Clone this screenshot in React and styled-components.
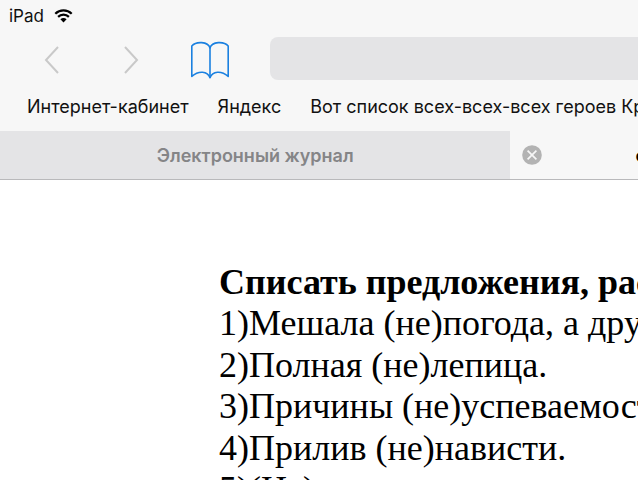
import React, { useState } from "react"
import styled, { createGlobalStyle } from "styled-components"

const GlobalStyle = createGlobalStyle`
    * {
        box-sizing: border-box;
    }

    body {
        margin: 0;
        background-color: #fff;
        font-family: Inter, "Liberation Sans", sans-serif;
        overflow: hidden;
    }
`

const Header = styled.header`
    background-color: #f7f7f7;
    border-bottom: 1px solid #b9b9bb;
`

const StatusBar = styled.div`
    display: flex;
    align-items: center;
    gap: 10px;
    height: 32px;
    padding-left: 9px;
    font-size: 17px;
    color: #111;
`

const Toolbar = styled.div`
    display: flex;
    align-items: center;
    height: 53px;
    padding-left: 32px;
`

const IconButton = styled.button`
    display: flex;
    align-items: center;
    justify-content: center;
    flex: none;
    width: 40px;
    height: 44px;
    margin-right: ${(props) => props.$gap}px;
    padding: 0;
    border: none;
    background: none;
    color: ${(props) => (props.disabled ? "#c9c9c9" : "#1a80e0")};
`

const AddressInput = styled.input`
    flex: 1;
    min-width: 0;
    height: 43px;
    padding: 0 12px;
    border: none;
    border-radius: 8px 0 0 8px;
    background-color: #e4e4e6;
    font-family: inherit;
    font-size: 18px;
    outline: none;
`

const Favorites = styled.nav`
    display: flex;
    align-items: center;
    gap: 29px;
    height: 46px;
    padding: 0 0 4px 27px;
    overflow: hidden;
`

const FavoriteLink = styled.a`
    flex: none;
    color: #111;
    font-size: 18px;
    text-decoration: none;
    white-space: nowrap;
`

const Tabs = styled.div`
    display: flex;
    height: 48px;
    overflow: hidden;
`

const Tab = styled.div`
    display: flex;
    align-items: center;
    flex: 0 0 80%;
    padding-left: ${(props) => (props.$active ? 12 : 0)}px;
    background-color: ${(props) => (props.$active ? "#f7f7f7" : "#e4e4e6")};
`

const TabTitle = styled.button`
    flex: 1;
    padding: 0;
    border: none;
    background: none;
    font-family: inherit;
    font-size: 18px;
    font-weight: 600;
    color: ${(props) => (props.$active ? "#000" : "#858587")};
    text-align: ${(props) => (props.$active ? "left" : "center")};
`

const CloseButton = styled.button`
    display: flex;
    flex: none;
    margin-right: 93px;
    padding: 0;
    border: none;
    background: none;
`

const Page = styled.main`
    padding: 82px 0 0 219px;
    font-family: "Liberation Serif", "Times New Roman", serif;
    font-size: 36px;
    line-height: 1.15;
    white-space: nowrap;
    color: #000;
`

const Heading = styled.h1`
    margin: 0;
    font-size: inherit;
    font-weight: bold;
`

const Line = styled.p`
    margin: 0;
`

const favorites = ["Интернет-кабинет", "Яндекс", "Вот список всех-всех-всех героев Кр"]

const lines = [
    "1)Мешала (не)погода, а дру",
    "2)Полная (не)лепица.",
    "3)Причины (не)успеваемост",
    "4)Прилив (не)нависти.",
    "5)(Не)",
]

const WifiIcon = () => (
    <svg width="19" height="14" viewBox="0 0 19 14" fill="none" stroke="#000" strokeWidth="2.2">
        <path d="M1.3 4.7C5.8 0.2 13.2 0.2 17.7 4.7" />
        <path d="M4.1 7.9C7.1 4.9 11.9 4.9 14.9 7.9" />
        <path d="M9.5 13.4L6.4 10.3C8.1 8.7 10.9 8.7 12.6 10.3Z" fill="#000" stroke="none" />
    </svg>
)

const ChevronIcon = ({ points }) => (
    <svg width="16" height="30" viewBox="0 0 16 30" fill="none" stroke="currentColor" strokeWidth="2">
        <polyline points={points} />
    </svg>
)

const BookIcon = () => (
    <svg width="40" height="40" viewBox="0 0 40 40" fill="none" stroke="currentColor" strokeWidth="1.6" strokeLinejoin="round">
        <path d="M20 9C18 2.3 6 2.1 1.8 7V37.4C8.5 31.5 17.5 31.8 20 38.8C22.5 31.8 31.5 31.5 38.2 37.4V7C34 2.1 22 2.3 20 9Z" />
        <path d="M20 9V38.8" />
    </svg>
)

const CloseIcon = () => (
    <svg width="20" height="20" viewBox="0 0 20 20">
        <circle cx="10" cy="10" r="9.8" fill="#b3b3b3" />
        <path d="M5.6 5.6L14.4 14.4M14.4 5.6L5.6 14.4" stroke="#f7f7f7" strokeWidth="1.7" />
    </svg>
)

const App = () => {
    const [address, setAddress] = useState("")

    return (
        <>
            <GlobalStyle />
            <Header>
                <StatusBar>
                    <span>iPad</span>
                    <WifiIcon />
                </StatusBar>
                <Toolbar>
                    <IconButton disabled $gap={39} aria-label="Назад">
                        <ChevronIcon points="14,3 2,16 14,29" />
                    </IconButton>
                    <IconButton disabled $gap={39} aria-label="Вперёд">
                        <ChevronIcon points="2,3 14,16 2,29" />
                    </IconButton>
                    <IconButton $gap={40} aria-label="Закладки">
                        <BookIcon />
                    </IconButton>
                    <AddressInput
                        type="text"
                        aria-label="Адрес"
                        value={address}
                        onChange={(e) => setAddress(e.target.value)}
                    />
                </Toolbar>
                <Favorites>
                    {favorites.map((name) => (
                        <FavoriteLink key={name} href="#">
                            {name}
                        </FavoriteLink>
                    ))}
                </Favorites>
                <Tabs>
                    <Tab>
                        <TabTitle>Электронный журнал</TabTitle>
                    </Tab>
                    <Tab $active>
                        <CloseButton aria-label="Закрыть вкладку">
                            <CloseIcon />
                        </CloseButton>
                        <TabTitle $active>с</TabTitle>
                    </Tab>
                </Tabs>
            </Header>
            <Page>
                <Heading>Списать предложения, рас</Heading>
                {lines.map((line) => (
                    <Line key={line}>{line}</Line>
                ))}
            </Page>
        </>
    )
}

export default App
